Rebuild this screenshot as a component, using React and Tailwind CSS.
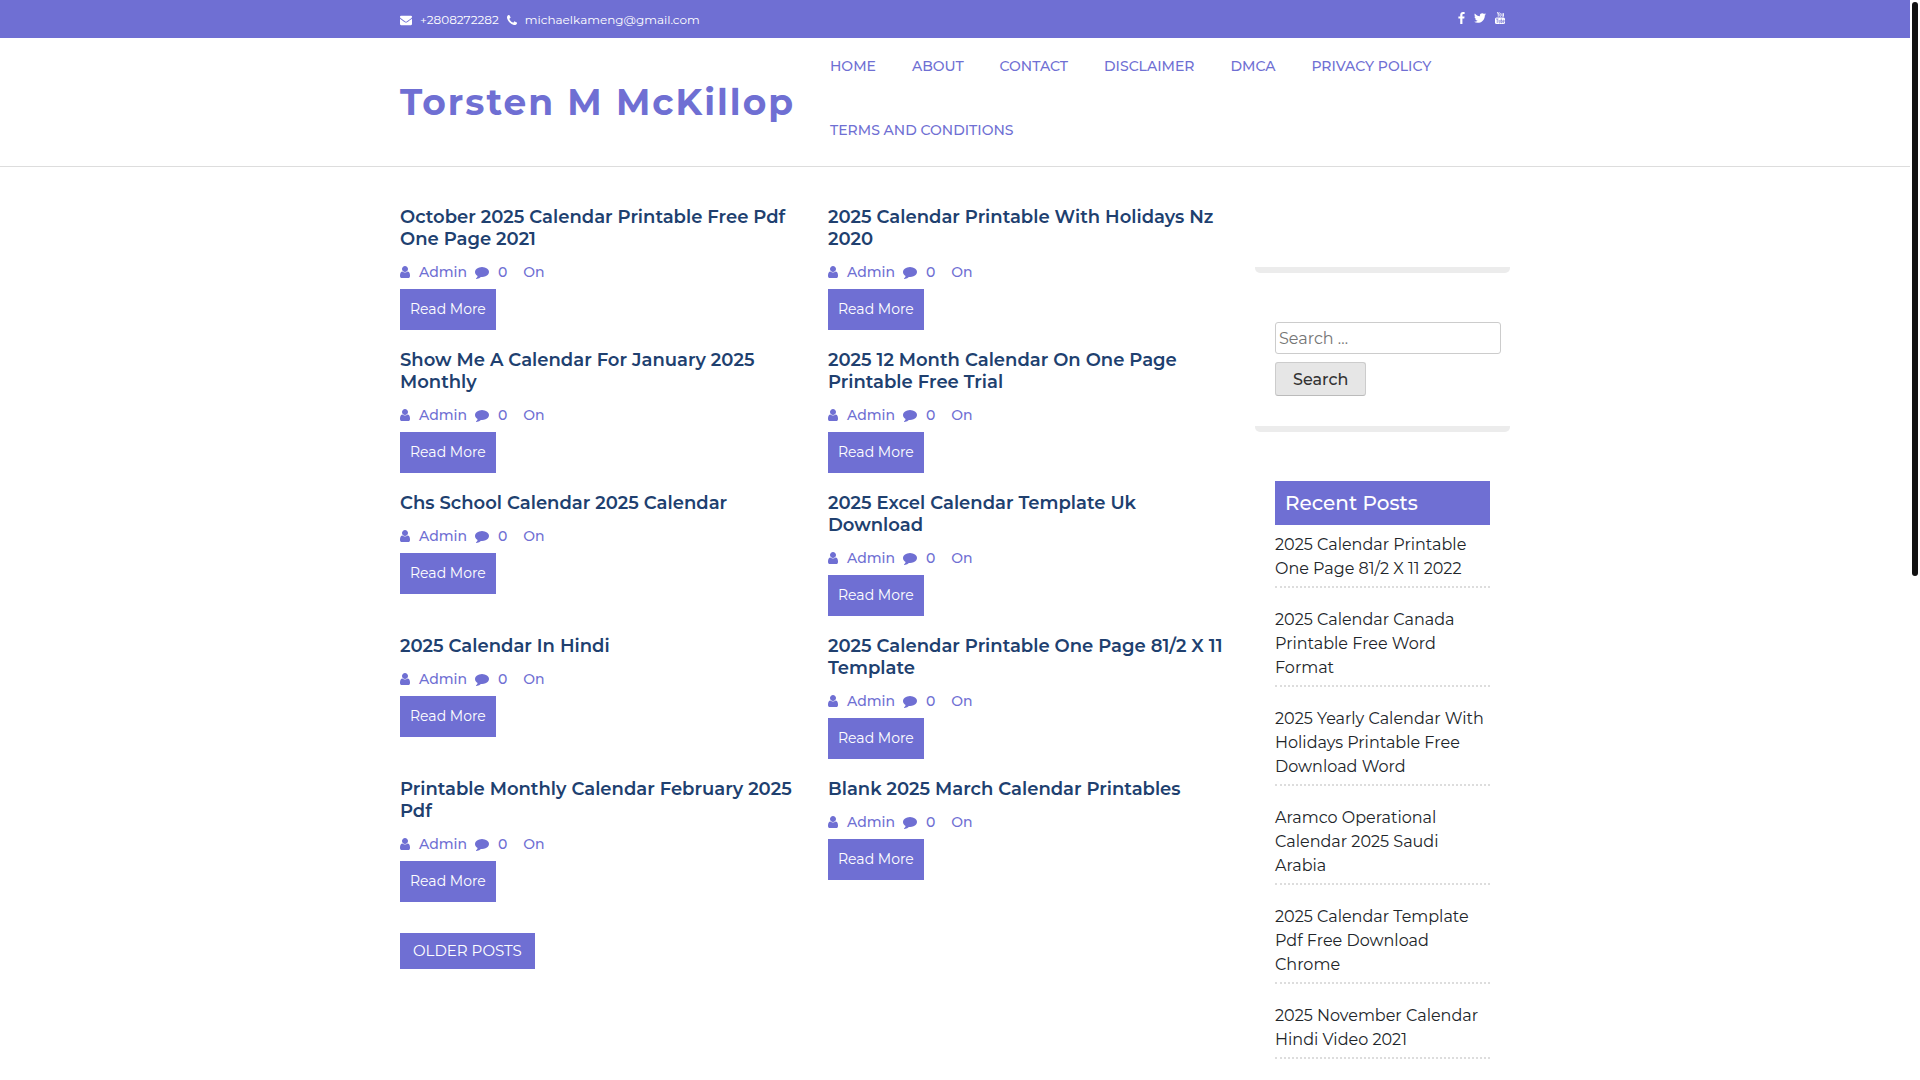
const ICONS = {
  envelope:
    "M1792 710v794q0 66-47 113t-113 47h-1472q-66 0-113-47t-47-113v-794q44 49 101 87 362 246 497 345 57 42 92.5 65.5t94.5 48 110 24.5h2q51 0 110-24.5t94.5-48 92.5-65.5q170-123 498-345 57-39 100-87zm0-294q0 79-49 151t-122 123q-376 261-468 325-10 7-42.5 31t-54 38.5-52 32.5-57.5 27-50 9h-2q-23 0-50-9t-57.5-27-52-32.5-54-38.5-42.5-31q-91-64-262-182.5t-205-142.5q-62-42-117-115.5t-55-136.5q0-78 41.5-130t118.5-52h1472q65 0 112.5 47t47.5 113z",
  phone:
    "M1600 1240q0 27-10 70.5t-21 68.5q-21 50-122 106-94 51-186 51-27 0-53-3.5t-57.5-12.5-47-14.5-55.5-20.5-49-18q-98-35-175-83-127-79-264-216t-216-264q-48-77-83-175-3-9-18-49t-20.5-55.5-14.5-47-12.5-57.5-3.5-53q0-92 51-186 56-101 106-122 25-11 68.5-21t70.5-10q14 0 21 3 18 6 53 76 11 19 30 54t35 63.5 31 53.5q3 4 17.5 25t21.5 35.5 7 28.5q0 20-28.5 50t-62 55-62 53-28.5 46q0 9 5 22.5t8.5 20.5 14 24 11.5 19q76 137 174 235t235 174q2 1 19 11.5t24 14 20.5 8.5 22.5 5q18 0 46-28.5t53-62 55-62 50-28.5q14 0 28.5 7t35.5 21.5 25 17.5q25 15 53.5 31t63.5 35 54 30q70 35 76 53 3 7 3 21z",
  facebook:
    "M1343 12v264h-157q-86 0-116 36t-30 108v189h293l-39 296h-254v759h-306v-759h-255v-296h255v-218q0-186 104-288.5t277-102.5q147 0 228 12z",
  twitter:
    "M1684 408q-67 98-162 167 1 14 1 42 0 130-38 259.5t-115.5 248.5-184.5 210.5-258 146-323 54.5q-271 0-496-145 35 4 78 4 225 0 401-138-105-2-188-64.5t-114-159.5q33 5 61 5 43 0 85-11-112-23-185.5-111.5t-73.5-205.5v-4q68 38 146 41-66-44-105-115t-39-154q0-88 44-163 121 149 294.5 238.5t371.5 99.5q-8-38-8-74 0-134 94.5-228.5t228.5-94.5q140 0 236 102 109-21 205-78-37 115-142 178 93-10 186-50z",
  user:
    "M1536 1399q0 109-62.5 187t-150.5 78h-854q-88 0-150.5-78t-62.5-187q0-85 8.5-160.5t31.5-152 58.5-131 94-89 134.5-34.5q131 128 313 128t313-128q76 0 134.5 34.5t94 89 58.5 131 31.5 152 8.5 160.5zm-256-887q0 159-112.5 271.5t-271.5 112.5-271.5-112.5-112.5-271.5 112.5-271.5 271.5-112.5 271.5 112.5 112.5 271.5z",
  comment:
    "M1792 896q0 174-120 321.5t-326 233-450 85.5q-70 0-145-8-198 175-460 242-49 14-114 22-17 2-30.5-9t-17.5-29v-1q-3-4-.5-12t2-10 4.5-9.5l6-9 7-8.5 8-9q7-8 31-34.5t34.5-38 31-39.5 32.5-51 27-59 26-76q-157-89-247.5-220t-90.5-281q0-130 71-248.5t191-204.5 286-136.5 348-50.5 348 50.5 286 136.5 191 204.5 71 248.5z",
};

function Icon({ name, viewBox = "0 0 1792 1792", className }) {
  return (
    <svg viewBox={viewBox} className={className} fill="currentColor" aria-hidden="true">
      <path d={ICONS[name]} />
    </svg>
  );
}

function YoutubeIcon() {
  return (
    <svg viewBox="0 0 20 24" className="h-3 w-[10px]" fill="none" stroke="currentColor" aria-hidden="true">
      <path d="M4.500 0l2 5v4.500M8.500 0l-2 5" strokeWidth="1.600" />
      <rect x="9.500" y="3" width="2.500" height="6" rx="1.200" strokeWidth="1.400" />
      <path d="M14.200 2.500v5.500q.8 2 2.600 0V2.500v7.200" strokeWidth="1.400" />
      <rect y="11" width="20" height="13" rx="3" fill="currentColor" stroke="none" />
      <g stroke="#6f6fd3" strokeWidth="1.300">
        <path d="M2 14h5M4.500 14v8M8 16v5q1 1.500 2.300 0V16" />
        <path d="M12.500 13v9M12.500 17.200q2-1.200 2 .5v3q0 1.500-2 .6" />
        <path d="M18.500 20q-2 3-2-.5v-2q0-1.500 1-1.500t1 1.500v1.200h-2" />
      </g>
    </svg>
  );
}

const NAV = ["Home", "About", "Contact", "Disclaimer", "DMCA", "Privacy Policy", "Terms And Conditions"];

const POSTS = [
  "October 2025 Calendar Printable Free Pdf One Page 2021",
  "2025 Calendar Printable With Holidays Nz 2020",
  "Show Me A Calendar For January 2025 Monthly",
  "2025 12 Month Calendar On One Page Printable Free Trial",
  "Chs School Calendar 2025 Calendar",
  "2025 Excel Calendar Template Uk Download",
  "2025 Calendar In Hindi",
  "2025 Calendar Printable One Page 81/2 X 11 Template",
  "Printable Monthly Calendar February 2025 Pdf",
  "Blank 2025 March Calendar Printables",
];

const RECENT = [
  "2025 Calendar Printable One Page 81/2 X 11 2022",
  "2025 Calendar Canada Printable Free Word Format",
  "2025 Yearly Calendar With Holidays Printable Free Download Word",
  "Aramco Operational Calendar 2025 Saudi Arabia",
  "2025 Calendar Template Pdf Free Download Chrome",
  "2025 November Calendar Hindi Video 2021",
];

function TopBar() {
  return (
    <div className="bg-[#6f6fd3] text-white">
      <div className="mx-auto flex h-[38px] max-w-[1140px] items-center justify-between px-[15px]">
        <div className="flex items-center pt-px text-[12px] leading-5">
          <Icon name="envelope" className="mr-2 size-3" />
          <span className="mr-2">+2808272282</span>
          <Icon name="phone" viewBox="192 128 1408 1408" className="mr-2 size-[10px]" />
          <span>michaelkameng@gmail.com</span>
        </div>
        <div className="flex items-center gap-[9px] pr-[5px] pb-[2px]">
          <a href="#facebook" aria-label="Facebook">
            <Icon name="facebook" viewBox="479 0 864 1664" className="h-3 w-[7px]" />
          </a>
          <a href="#twitter" aria-label="Twitter">
            <Icon name="twitter" viewBox="108 256 1576 1280" className="h-[10px] w-3" />
          </a>
          <a href="#youtube" aria-label="YouTube">
            <YoutubeIcon />
          </a>
        </div>
      </div>
    </div>
  );
}

function Header() {
  return (
    <header className="border-b border-[#dddddd]">
      <div className="mx-auto flex max-w-[1140px] items-center px-[15px]">
        <a href="#home" className="shrink-0 text-[36px] leading-[44px] font-bold tracking-[2px] whitespace-nowrap text-[#6f6fd3]">
          Torsten M McKillop
        </a>
        <nav className="ml-auto w-[680px]">
          <ul className="flex flex-wrap gap-x-9">
            {NAV.map((item) => (
              <li key={item} className="pt-4 pb-6">
                <a href="#nav" className="block text-[14px] leading-6 font-medium text-[#6f6fd3] uppercase">
                  {item}
                </a>
              </li>
            ))}
          </ul>
        </nav>
      </div>
    </header>
  );
}

function Post({ title }) {
  return (
    <article className="pb-[19px]">
      <h2 className="text-[18px] leading-[22px] font-semibold text-[#20406f]">
        <a href="#post">{title}</a>
      </h2>
      <div className="mt-[10px] mb-[5px] flex items-center text-[14px] leading-6 font-medium text-[#6f6fd3]">
        <Icon name="user" viewBox="256 128 1280 1536" className="mr-[9px] h-3 w-[10px]" />
        <a href="#admin" className="mr-2">Admin</a>
        <Icon name="comment" className="mr-[9px] size-[14px]" />
        <span className="mr-4">0</span>
        <span>On</span>
      </div>
      <a href="#post" className="inline-block bg-[#6f6fd3] px-[10px] pt-2 pb-[9px] align-top text-[14px] leading-6 text-white">
        Read More
      </a>
    </article>
  );
}

function Sidebar() {
  return (
    <aside className="w-[255px] shrink-0">
      <div className="h-[67px] rounded-b-[5px] border-b-[6px] border-[#ececec]" />
      <form className="rounded-b-[5px] border-b-[6px] border-[#ececec] px-5 pt-[49px] pb-[30px]">
        <input
          type="search"
          aria-label="Search for"
          placeholder="Search …"
          className="block h-8 w-[226px] rounded-[3px] border border-[#cccccc] px-[3px] text-[16px] leading-6 placeholder:text-[#757575]"
        />
        <button
          type="button"
          className="mt-2 block h-[34px] rounded-[3px] border border-[#cccccc] border-b-[#bbbbbb] bg-[#e6e6e6] px-[17px] pt-[2px] text-[16px] leading-6 font-medium text-[#333333]"
        >
          Search
        </button>
      </form>
      <section className="px-5 pt-[49px]">
        <h2 className="mb-2 bg-[#6f6fd3] px-[10px] py-[10px] text-[20px] leading-6 font-medium text-white">Recent Posts</h2>
        <ul>
          {RECENT.map((title) => (
            <li key={title} className="mb-5 border-b-2 border-dotted border-[#dddddd] pb-[5px] text-[16px] leading-6 text-[#212529]">
              <a href="#recent" className="block">
                {title}
              </a>
            </li>
          ))}
        </ul>
      </section>
    </aside>
  );
}

export default function App() {
  return (
    <div className="flex h-screen overflow-hidden bg-white font-[Montserrat,Inter,sans-serif]">
      <div className="min-w-0 flex-1">
        <TopBar />
        <Header />
        <div className="mx-auto flex max-w-[1140px] justify-between px-[15px] pt-[39px]">
          <main className="min-w-0 flex-1 pr-[29px]">
            <div className="grid grid-cols-2 gap-x-[30px]">
              {POSTS.map((title) => (
                <Post key={title} title={title} />
              ))}
            </div>
            <a href="#older" className="mt-3 inline-block bg-[#6f6fd3] px-[13px] py-[6px] text-[15px] leading-6 text-white uppercase">
              Older Posts
            </a>
          </main>
          <Sidebar />
        </div>
      </div>
      <div className="w-[10px] shrink-0 px-[2px] pt-[2px]" aria-hidden="true">
        <div className="h-[calc(53%+3px)] rounded-full bg-[#111111]" />
      </div>
    </div>
  );
}
